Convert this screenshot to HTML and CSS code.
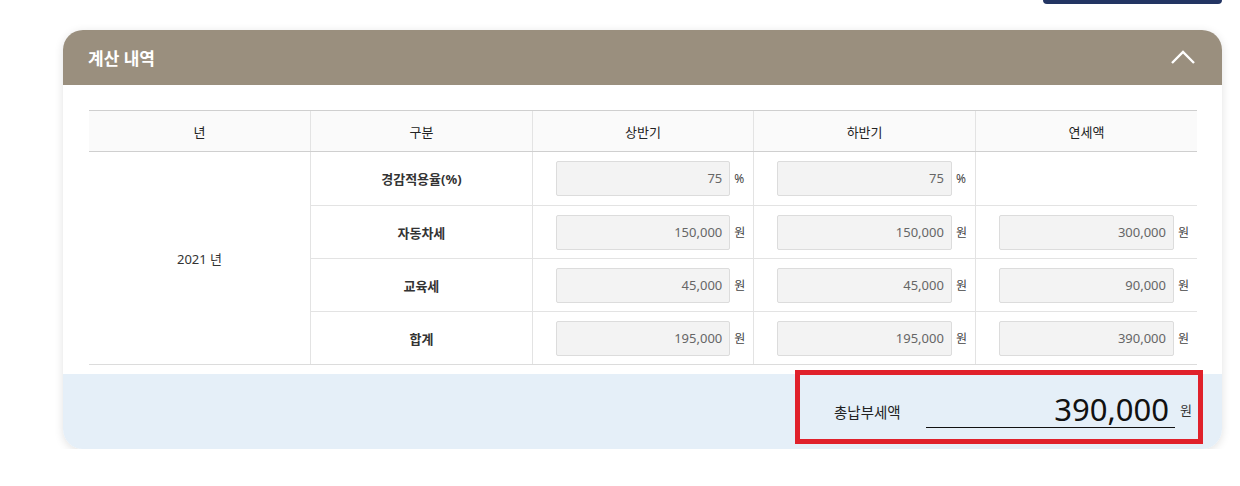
FILE: index.html
```html
<!DOCTYPE html>
<html lang="ko">
<head>
    <meta charset="UTF-8">
    <title>계산 내역</title>
    <link rel="stylesheet" href="styles.css">
</head>
<body>
    <div class="top-bar">
        <div class="top-btn"></div>
    </div>

    <div class="calc-card">
        <div class="calc-head">
            <h2>계산 내역</h2>
            <svg class="toggle" width="26" height="16" viewBox="0 0 26 16">
                <polyline points="2,14 13,3 24,14" fill="none" stroke="#fff" stroke-width="2.4"/>
            </svg>
        </div>

        <div class="calc-body">
            <table class="calc-table">
                <thead>
                    <tr>
                        <th>년</th>
                        <th>구분</th>
                        <th>상반기</th>
                        <th>하반기</th>
                        <th>연세액</th>
                    </tr>
                </thead>
                <tbody>
                    <tr>
                        <td rowspan="4" class="year">2021 년</td>
                        <td class="label">경감적용율(%)</td>
                        <td><div class="field"><span class="box">75</span><span class="unit">%</span></div></td>
                        <td><div class="field"><span class="box">75</span><span class="unit">%</span></div></td>
                        <td></td>
                    </tr>
                    <tr>
                        <td class="label">자동차세</td>
                        <td><div class="field"><span class="box">150,000</span><span class="unit">원</span></div></td>
                        <td><div class="field"><span class="box">150,000</span><span class="unit">원</span></div></td>
                        <td><div class="field"><span class="box">300,000</span><span class="unit">원</span></div></td>
                    </tr>
                    <tr>
                        <td class="label">교육세</td>
                        <td><div class="field"><span class="box">45,000</span><span class="unit">원</span></div></td>
                        <td><div class="field"><span class="box">45,000</span><span class="unit">원</span></div></td>
                        <td><div class="field"><span class="box">90,000</span><span class="unit">원</span></div></td>
                    </tr>
                    <tr>
                        <td class="label">합계</td>
                        <td><div class="field"><span class="box">195,000</span><span class="unit">원</span></div></td>
                        <td><div class="field"><span class="box">195,000</span><span class="unit">원</span></div></td>
                        <td><div class="field"><span class="box">390,000</span><span class="unit">원</span></div></td>
                    </tr>
                </tbody>
            </table>
        </div>

        <div class="calc-foot">
            <div class="total">
                <span class="total-label">총납부세액</span>
                <span class="total-value">390,000</span>
                <span class="total-unit">원</span>
            </div>
        </div>
    </div>
</body>
</html>
```

FILE: styles.css
```css
body {
    margin: 0;
    background-color: #fff;
    font-family: 'Noto Sans', 'Noto Sans CJK KR', sans-serif;
    color: #222;
}

.top-bar {
    height: 30px;
    display: flex;
    justify-content: flex-end;
    padding-right: 18px;
}

.top-btn {
    width: 179px;
    height: 4px;
    background-color: #233563;
    border-radius: 0 0 4px 4px;
}

.calc-card {
    margin: 0 18px 0 63px;
    border-radius: 20px;
    overflow: hidden;
    background-color: #fff;
    box-shadow: 0 2px 10px rgba(0, 0, 0, 0.12);
}

.calc-head {
    height: 55px;
    background-color: #9a8f7e;
    display: flex;
    align-items: center;
    justify-content: space-between;
    padding: 0 26px 0 25px;
}

.calc-head h2 {
    margin: 0;
    color: #fff;
    font-size: 17px;
    font-weight: bold;
}

.toggle {
    margin-top: -2px;
}

.calc-body {
    padding: 25px 25px 9px 26px;
}

.calc-table {
    width: 100%;
    border-collapse: collapse;
    table-layout: fixed;
    font-size: 13px;
}

.calc-table th {
    height: 40px;
    padding: 0;
    background-color: #fafafa;
    border-top: 1px solid #cfcfcf;
    border-bottom: 1px solid #cfcfcf;
    border-left: 1px solid #e3e3e3;
    font-weight: normal;
    color: #222;
    font-size: 13px;
}

.calc-table td {
    height: 52px;
    border-bottom: 1px solid #e3e3e3;
    border-left: 1px solid #e3e3e3;
    text-align: center;
    padding: 0;
}

.calc-table th:first-child,
.calc-table td.year {
    border-left: none;
}

.calc-table tbody tr:first-child td {
    height: 53px;
}

.calc-table tbody tr:last-child td,
.calc-table td.year {
    border-bottom-color: #dcdcdc;
}

.label {
    font-weight: bold;
    color: #333;
}

.year {
    color: #333;
}

.field {
    display: flex;
    align-items: center;
    padding: 0 6px 0 23px;
}

.box {
    flex: 1;
    height: 33px;
    line-height: 33px;
    background-color: #f3f3f3;
    border: 1px solid #dcdcdc;
    border-radius: 2px;
    text-align: right;
    padding-right: 7px;
    color: #666;
    font-size: 13px;
}

.unit {
    width: 13px;
    margin-left: 4px;
    text-align: left;
    font-size: 12px;
    color: #444;
}

.calc-foot {
    height: 75px;
    background-color: #e5eff8;
    display: flex;
    justify-content: flex-end;
    align-items: flex-start;
    padding-right: 19px;
}

.total {
    width: 398px;
    height: 64px;
    margin-top: -4px;
    border: 5px solid #e0212b;
    display: flex;
    align-items: center;
}

.total-label {
    margin-left: 34px;
    margin-top: 8px;
    width: 92px;
    font-size: 14.5px;
    color: #222;
}

.total-value {
    width: 249px;
    border-bottom: 1px solid #111;
    text-align: right;
    font-size: 31px;
    line-height: 36px;
    padding-right: 6px;
    box-sizing: border-box;
    margin-top: 4px;
    color: #111;
}

.total-unit {
    margin-left: 5px;
    margin-top: 4px;
    font-size: 13px;
    color: #333;
}
```
